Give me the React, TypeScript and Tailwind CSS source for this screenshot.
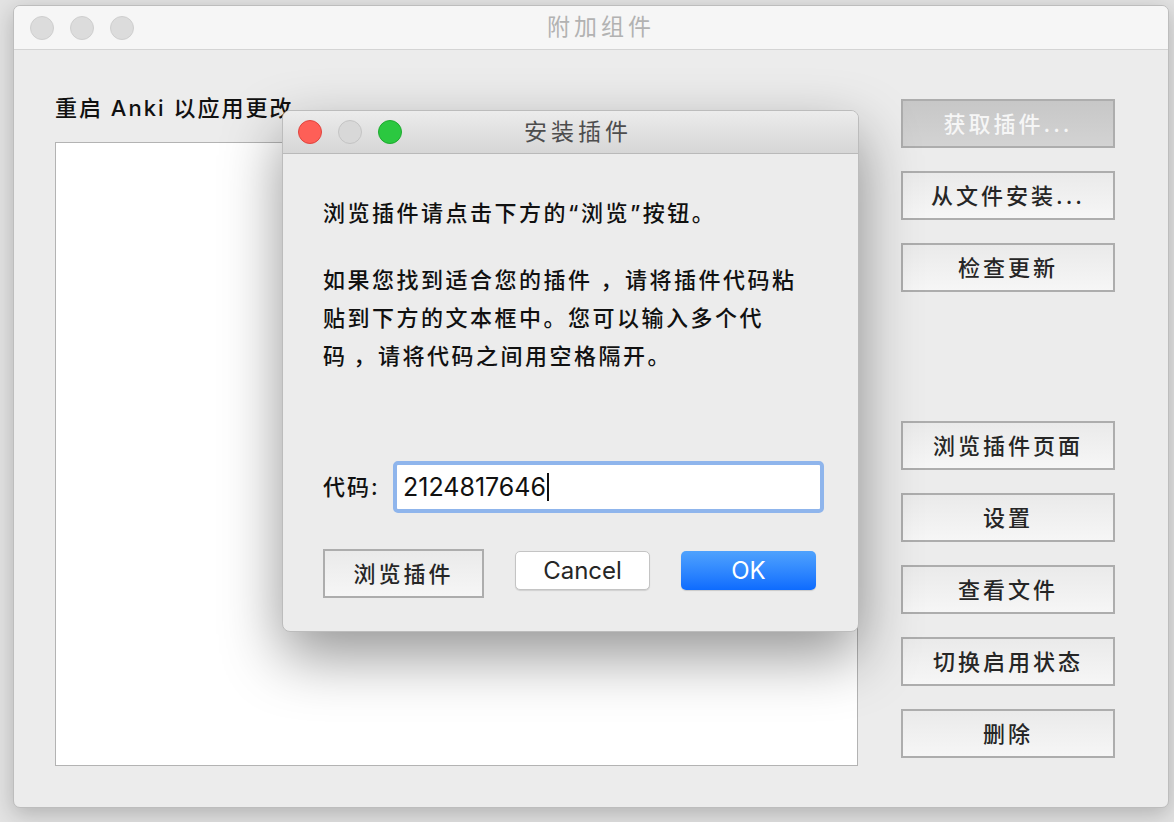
const cjk = "font-['Inter','Noto_Sans_CJK_SC',sans-serif]"

function SideButton({ label, active, className }: { label: string; active?: boolean; className?: string }) {
  return (
    <div
      className={
        'flex h-[49px] w-[214px] items-center justify-center border-2 border-[#adadad] text-[22px] font-medium leading-none tracking-[3px] ' +
        (active
          ? 'bg-gradient-to-b from-[#c7c7c7] to-[#d3d3d3] text-[#f6f6f6] '
          : 'bg-gradient-to-b from-[#eaeaea] to-[#f6f6f6] text-[#262626] ') +
        (className ?? '')
      }
    >
      {label}
    </div>
  )
}

function Light({ color }: { color: string }) {
  return <span className={'block h-[24px] w-[24px] rounded-full border ' + color} />
}

export default function App() {
  return (
    <div className={'relative h-[822px] w-[1174px] overflow-hidden bg-[#e3e3e3] pl-[13px] pt-[5px] ' + cjk}>
      <div className="flex h-[803px] w-[1156px] flex-col overflow-hidden rounded-[7px] border border-[#bdbdbd] bg-[#ececec] shadow-[0_6px_22px_rgba(0,0,0,0.22)]">
        <div className="grid h-[44px] grid-cols-[1fr_auto_1fr] items-center border-b border-[#d4d4d4] bg-[#f6f6f6] pl-[16px]">
          <div className="flex gap-[16px]">
            <Light color="bg-[#dcdcdc] border-[#cfcfcf]" />
            <Light color="bg-[#dcdcdc] border-[#cfcfcf]" />
            <Light color="bg-[#dcdcdc] border-[#cfcfcf]" />
          </div>
          <div className="pl-[4px] text-[23px] leading-none tracking-[4px] text-[#b2b2b2]">附加组件</div>
          <div />
        </div>

        <div className="flex pl-[41px]">
          <div className="flex flex-col">
            <div className="mt-[44px] whitespace-nowrap text-[22px] font-medium leading-[28px] tracking-[2px] text-[#111]">重启 Anki 以应用更改</div>
            <div className="mt-[20px] h-[624px] w-[803px] border border-[#b3b3b3] bg-white" />
          </div>
          <div className="ml-[43px] flex flex-col pt-[49px]">
            <SideButton label="获取插件..." active />
            <SideButton label="从文件安装..." className="mt-[23px]" />
            <SideButton label="检查更新" className="mt-[23px]" />
            <SideButton label="浏览插件页面" className="mt-[129px]" />
            <SideButton label="设置" className="mt-[23px]" />
            <SideButton label="查看文件" className="mt-[23px]" />
            <SideButton label="切换启用状态" className="mt-[23px]" />
            <SideButton label="删除" className="mt-[23px]" />
          </div>
        </div>
      </div>

      {/* install dialog */}
      <div className="absolute left-[282px] top-[110px] flex h-[522px] w-[577px] flex-col overflow-hidden rounded-[8px] border border-[#bcbcbc] bg-[#ececec] shadow-[0_24px_60px_rgba(0,0,0,0.42)]">
        <div className="grid h-[43px] grid-cols-[1fr_auto_1fr] items-center border-b border-[#b9b9b9] bg-gradient-to-b from-[#ececec] to-[#d6d6d6] pl-[15px]">
          <div className="flex gap-[16px]">
            <Light color="bg-[#fe5f57] border-[#e0443e]" />
            <Light color="bg-[#d8d8d8] border-[#c4c4c4]" />
            <Light color="bg-[#2bc840] border-[#1eaa2f]" />
          </div>
          <div className="text-[23px] leading-none tracking-[4px] text-[#4d4d4d]">安装插件</div>
          <div />
        </div>

        <div className="flex flex-col pl-[40px] pr-[34px] pt-[40px] font-medium text-[#111]">
          <div className="whitespace-nowrap text-[22px] leading-[38px] tracking-[2.5px]">浏览插件请点击下方的“浏览”按钮。</div>
          <div className="mt-[29px] whitespace-nowrap text-[22px] leading-[38px] tracking-[2.5px]">
            <div>
              如果您找到适合您的插件<span className="ml-[8px]">，</span>请将插件代码粘
            </div>
            <div>贴到下方的文本框中。您可以输入多个代</div>
            <div>
              码<span className="ml-[6px]">，</span>请将代码之间用空格隔开。
            </div>
          </div>

          <div className="mt-[86px] flex items-center justify-between">
            <span className="text-[22px] leading-none tracking-[2px]">代码:</span>
            <div className="flex h-[52px] w-[431px] items-center rounded-[5px] border-[4px] border-[#8fb5ec] bg-white pl-[6px] font-normal">
              <span className="text-[25px] leading-none text-[#111]">2124817646</span>
              <span className="ml-[1px] block h-[28px] w-[2px] bg-[#111]" />
            </div>
          </div>

          <div className="mt-[36px] flex items-start">
            <div className="flex h-[49px] w-[161px] items-center justify-center border-2 border-[#adadad] bg-gradient-to-b from-[#eaeaea] to-[#f6f6f6] text-[22px] leading-none tracking-[3px] text-[#262626]">
              浏览插件
            </div>
            <div className="ml-[31px] mt-[2px] flex h-[39px] w-[135px] items-center justify-center rounded-[5px] border border-[#c4c4c4] bg-white text-[24px] font-normal leading-none text-[#262626] shadow-[0_1px_1px_rgba(0,0,0,0.12)]">
              Cancel
            </div>
            <div className="ml-[31px] mt-[2px] flex h-[39px] w-[135px] items-center justify-center rounded-[5px] bg-gradient-to-b from-[#4fa2fd] to-[#0d6bfe] text-[24px] font-normal leading-none text-white shadow-[0_1px_1px_rgba(0,0,0,0.15)]">
              OK
            </div>
          </div>
        </div>
      </div>
    </div>
  )
}
